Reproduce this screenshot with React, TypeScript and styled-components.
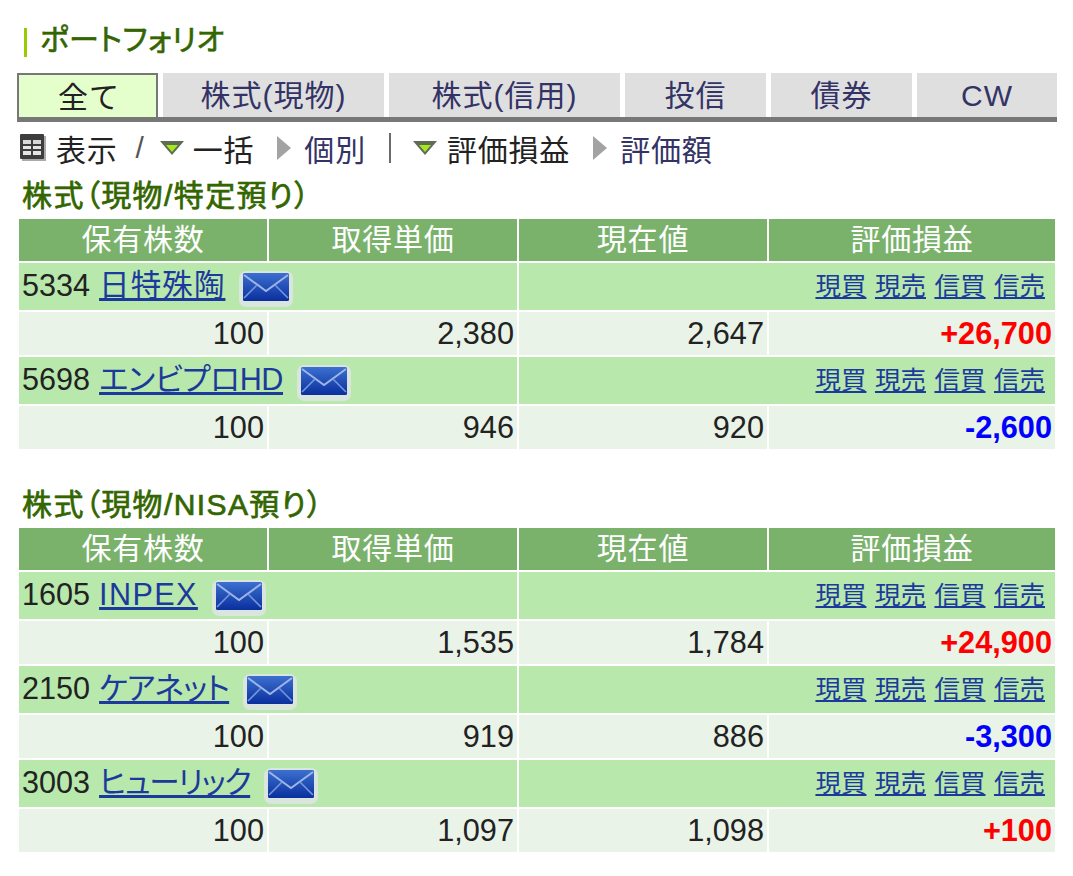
import React from 'react';
import styled, { createGlobalStyle } from 'styled-components';

const GlobalStyle = createGlobalStyle`
  body {
    margin: 0;
    background: #fff;
    color: #222;
    font-family: "Liberation Sans", "Noto Sans CJK JP", sans-serif;
  }
`;

type Holding = {
  code: string;
  name: string;
  tracking: number;
  qty: string;
  cost: string;
  price: string;
  pl: string;
};

const tabs = [
  { label: '全て', width: 141 },
  { label: '株式(現物)', width: 221 },
  { label: '株式(信用)', width: 231 },
  { label: '投信', width: 141 },
  { label: '債券', width: 141 },
  { label: 'CW', width: 140 },
];

const sections: { title: string; rows: Holding[] }[] = [
  {
    title: '株式（現物/特定預り）',
    rows: [
      { code: '5334', name: '日特殊陶', tracking: 1, qty: '100', cost: '2,380', price: '2,647', pl: '+26,700' },
      { code: '5698', name: 'エンビプロHD', tracking: -0.4, qty: '100', cost: '946', price: '920', pl: '-2,600' },
    ],
  },
  {
    title: '株式（現物/NISA預り）',
    rows: [
      { code: '1605', name: 'INPEX', tracking: 1.4, qty: '100', cost: '1,535', price: '1,784', pl: '+24,900' },
      { code: '2150', name: 'ケアネット', tracking: -0.8, qty: '100', cost: '919', price: '886', pl: '-3,300' },
      { code: '3003', name: 'ヒューリック', tracking: -1.5, qty: '100', cost: '1,097', price: '1,098', pl: '+100' },
    ],
  },
];

const MailIcon = () => (
  <MailSvg viewBox="0 0 54 36">
    <defs>
      <linearGradient id="mailFill" x1="0" y1="0" x2="0" y2="1">
        <stop offset="0" stopColor="#3c70cf" />
        <stop offset="1" stopColor="#0a2f9e" />
      </linearGradient>
    </defs>
    <rect x="0" y="0" width="54" height="36" rx="7" fill="#dde4e2" opacity="0.9" />
    <rect x="4" y="2" width="46" height="28" rx="1.5" fill="url(#mailFill)" />
    <path d="M5 4 L27 20 L49 4" fill="none" stroke="#9db6e6" strokeWidth="2" />
    <path d="M5 27 L18 14 M49 27 L36 14" fill="none" stroke="#7396dc" strokeWidth="1.6" />
  </MailSvg>
);

const ListIcon = () => (
  <svg width="26" height="27" viewBox="0 0 26 27">
    <rect x="2" y="2" width="24" height="25" fill="#aaa" />
    <rect x="0" y="0" width="24" height="25" rx="1" fill="#3d3d3d" />
    <rect x="3" y="6" width="18" height="4" fill="#d8d8d8" />
    <rect x="3" y="12" width="18" height="3" fill="#e4e4e4" />
    <rect x="3" y="17" width="18" height="4" fill="#e4e4e4" />
    <rect x="11" y="6" width="2" height="15" fill="#3d3d3d" />
  </svg>
);

const DownMark = () => (
  <svg width="26" height="16" viewBox="0 0 26 16">
    <path d="M1 1 H25 L13 15 Z" fill="#5f6b55" />
    <path d="M7 5 H19 L13 12 Z" fill="#a4e81e" />
  </svg>
);

const RightMark = () => (
  <svg width="14" height="24" viewBox="0 0 14 24">
    <path d="M0 0 L14 12 L0 24 Z" fill="#a3a3a3" />
  </svg>
);

const HoldingRows = ({ row }: { row: Holding }) => (
  <>
    <tr>
      <NameCell colSpan={2}>
        <NameRow>
          {row.code}
          <StockLink href="#" $tracking={row.tracking}>{row.name}</StockLink>
          <MailIcon />
        </NameRow>
      </NameCell>
      <TradeCell colSpan={2}>
        {['現買', '現売', '信買', '信売'].map((t) => (
          <TradeLink href="#" key={t}>{t}</TradeLink>
        ))}
      </TradeCell>
    </tr>
    <tr>
      <NumCell>{row.qty}</NumCell>
      <NumCell>{row.cost}</NumCell>
      <NumCell>{row.price}</NumCell>
      <PlCell $loss={row.pl.startsWith('-')}>{row.pl}</PlCell>
    </tr>
  </>
);

export default function App() {
  return (
    <Page>
      <GlobalStyle />
      <Title>ポートフォリオ</Title>
      <TabBar>
        {tabs.map((t, i) => (
          <Tab key={t.label} $active={i === 0} $width={t.width}>{t.label}</Tab>
        ))}
      </TabBar>
      <Options>
        <ListIcon />
        <OptionText $left={10}>表示</OptionText>
        <Slash>/</Slash>
        <DownMark />
        <OptionText $left={8}>一括</OptionText>
        <MarkGap><RightMark /></MarkGap>
        <OptionLink>個別</OptionLink>
        <Bar />
        <DownMark />
        <OptionText $left={9}>評価損益</OptionText>
        <MarkGap><RightMark /></MarkGap>
        <OptionLink>評価額</OptionLink>
      </Options>
      {sections.map((s) => (
        <Section key={s.title}>
          <SectionTitle>{s.title}</SectionTitle>
          <Table>
            <colgroup>
              <col width="248" />
              <col width="248" />
              <col width="248" />
              <col width="286" />
            </colgroup>
            <thead>
              <tr>
                <HeadCell>保有株数</HeadCell>
                <HeadCell>取得単価</HeadCell>
                <HeadCell>現在値</HeadCell>
                <HeadCell>評価損益</HeadCell>
              </tr>
            </thead>
            <tbody>
              {s.rows.map((r) => (
                <HoldingRows row={r} key={r.code} />
              ))}
            </tbody>
          </Table>
        </Section>
      ))}
    </Page>
  );
}

const Page = styled.div`
  width: 1073px;
  height: 876px;
  overflow: hidden;
  padding: 20px 16px 0 17px;
  box-sizing: border-box;
`;

const Title = styled.h1`
  margin: 0 0 14px 7px;
  height: 39px;
  line-height: 41px;
  font-size: 30px;
  font-weight: normal;
  -webkit-text-stroke: 0.6px #336600;
  color: #336600;
  font-feature-settings: 'palt';
  letter-spacing: 0.3px;
  display: flex;
  align-items: center;
  &::before {
    content: '';
    width: 3px;
    height: 29px;
    margin: 6px 13px 0 0;
    background: #99cc00;
  }
`;

const TabBar = styled.div`
  display: flex;
  gap: 5px;
  width: 1040px;
  border-bottom: 5px solid #777;
`;

const Tab = styled.div<{ $active: boolean; $width: number }>`
  width: ${(p) => p.$width}px;
  height: 44px;
  box-sizing: border-box;
  padding-left: ${(p) => (p.$active ? '3px' : '0')};
  text-align: center;
  font-size: 30px;
  letter-spacing: 1px;
  line-height: 46px;
  color: ${(p) => (p.$active ? '#222' : '#333366')};
  background: ${(p) => (p.$active ? '#e4ffcc' : '#dfdfdf')};
  border: ${(p) => (p.$active ? '2px solid #777' : 'none')};
  border-bottom: none;
  white-space: nowrap;
`;

const Options = styled.div`
  display: flex;
  align-items: center;
  height: 47px;
  box-sizing: border-box;
  padding: 4px 0 0 3px;
  font-size: 30px;
  letter-spacing: 0.8px;
`;

const OptionText = styled.span<{ $left: number }>`
  margin-left: ${(p) => p.$left}px;
  color: #222;
`;

const OptionLink = styled.span`
  margin-left: 13px;
  color: #333366;
`;

const Slash = styled.span`
  margin: 0 14px 0 18px;
  font-size: 30px;
  font-weight: 300;
  color: #555;
`;

const MarkGap = styled.span`
  display: flex;
  margin-left: 23px;
`;

const Bar = styled.span`
  width: 2px;
  height: 30px;
  margin: 0 21px 0 23px;
  background: #6b6b6b;
`;

const Section = styled.section`
  margin-bottom: 27px;
`;

const SectionTitle = styled.h2`
  margin: 0 0 0 5px;
  height: 48px;
  line-height: 54px;
  font-size: 30px;
  font-weight: normal;
  -webkit-text-stroke: 0.7px #336600;
  color: #336600;
  font-feature-settings: 'palt';
  letter-spacing: 1.4px;
`;

const Table = styled.table`
  width: 1040px;
  table-layout: fixed;
  border-collapse: separate;
  border-spacing: 2px;
`;

const HeadCell = styled.th`
  height: 42px;
  padding: 0;
  line-height: 42px;
  vertical-align: top;
  background: #7ab26c;
  color: #fff;
  font-size: 30px;
  font-weight: normal;
  letter-spacing: 0.8px;
`;

const NameCell = styled.td`
  height: 47px;
  padding: 0 0 0 3px;
  background: #b8e8ac;
  font-size: 30.6px;
  line-height: 44px;
  white-space: nowrap;
`;

const NameRow = styled.div`
  display: flex;
  align-items: flex-start;
  height: 47px;
`;

const TradeCell = styled.td`
  height: 47px;
  padding: 0 10px 0 0;
  background: #b8e8ac;
  text-align: right;
  font-size: 25.5px;
  line-height: 46px;
  vertical-align: top;
  white-space: nowrap;
`;

const StockLink = styled.a<{ $tracking: number }>`
  align-self: flex-start;
  height: 39px;
  margin-left: 9px;
  color: #1c3a9c;
  font-feature-settings: 'palt';
  letter-spacing: ${(p) => p.$tracking}px;
`;

const MailSvg = styled.svg`
  width: 54px;
  height: 36px;
  margin: 8px 0 0 14px;
  filter: blur(0.4px);
`;

const TradeLink = styled.a`
  margin-left: 8.5px;
  color: #1c3a9c;
`;

const NumCell = styled.td`
  height: 43px;
  padding: 0 3px 0 0;
  background: #e9f3e8;
  text-align: right;
  font-size: 30.7px;
  line-height: 41px;
`;

const PlCell = styled(NumCell)<{ $loss: boolean }>`
  font-weight: bold;
  color: ${(p) => (p.$loss ? '#0000ff' : '#ff0000')};
`;
